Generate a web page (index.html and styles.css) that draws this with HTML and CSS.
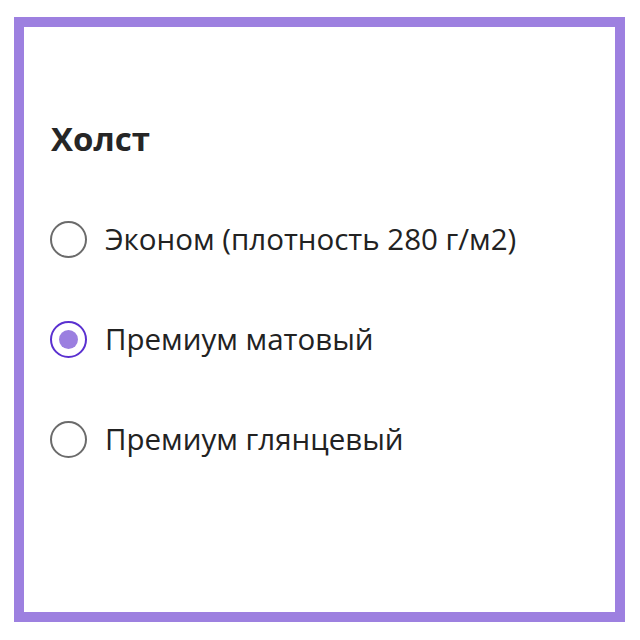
FILE: index.html
```html
<!DOCTYPE html>
<html lang="ru">
<head>
<meta charset="utf-8">
<link rel="stylesheet" href="styles.css">
</head>
<body>
<div class="frame">
  <h2 class="title">Холст</h2>
  <div class="options">
    <label class="option"><span class="radio"></span><span class="text">Эконом (плотность 280 г/м2)</span></label>
    <label class="option"><span class="radio checked"></span><span class="text">Премиум матовый</span></label>
    <label class="option"><span class="radio"></span><span class="text">Премиум глянцевый</span></label>
  </div>
</div>
</body>
</html>
```
FILE: styles.css
```css
html, body { margin: 0; padding: 0; background: #fff; }
body { width: 640px; height: 640px; padding: 17px 0 0 14px; box-sizing: border-box; }
.frame {
  width: 611px; height: 605px; box-sizing: border-box;
  border: 10px solid #9d80e0;
  padding: 92px 0 0 26px;
  font-family: "Open Sans", sans-serif;
  color: #222;
}
.title { margin: 0 0 0 1px; font-size: 33px; font-weight: 700; line-height: 40px; color: #262626; }
.options { display: flex; flex-direction: column; gap: 62px; margin-top: 61px; }
.option { display: flex; align-items: center; height: 38px; gap: 18px; font-size: 29.5px; }
.radio {
  width: 37px; height: 37px; box-sizing: border-box; border-radius: 50%;
  border: 2px solid #6b6b6b; display: flex; align-items: center; justify-content: center;
}
.radio.checked { border-color: #5a30d0; }
.radio.checked::after { content: ""; width: 19px; height: 19px; border-radius: 50%; background: #9b7fe0; }
.text { line-height: 38px; }
```
